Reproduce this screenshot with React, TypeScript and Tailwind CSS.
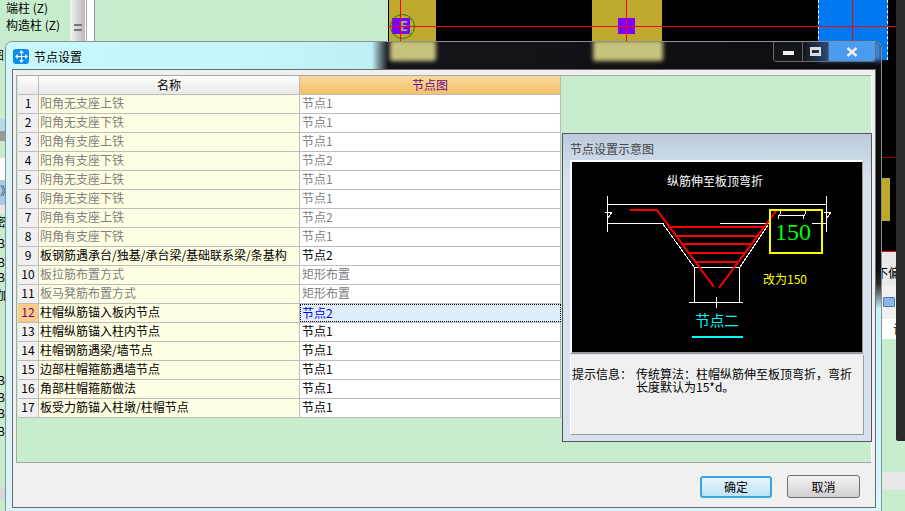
const rows = [
  ["阳角无支座上铁", "节点1", true],
  ["阳角无支座下铁", "节点1", true],
  ["阳角有支座上铁", "节点1", true],
  ["阳角有支座下铁", "节点2", true],
  ["阴角无支座上铁", "节点1", true],
  ["阴角无支座下铁", "节点1", true],
  ["阴角有支座上铁", "节点2", true],
  ["阴角有支座下铁", "节点1", true],
  ["板钢筋遇承台/独基/承台梁/基础联系梁/条基构", "节点2", false],
  ["板拉筋布置方式", "矩形布置", true],
  ["板马凳筋布置方式", "矩形布置", true],
  ["柱帽纵筋锚入板内节点", "节点2", false],
  ["柱帽纵筋锚入柱内节点", "节点1", false],
  ["柱帽钢筋遇梁/墙节点", "节点1", false],
  ["边部柱帽箍筋遇墙节点", "节点1", false],
  ["角部柱帽箍筋做法", "节点1", false],
  ["板受力筋锚入柱墩/柱帽节点", "节点1", false],
] as const;

function Diagram() {
  return (
    <svg viewBox="572 162 290 190" className="block h-[190px] w-[290px] bg-black">
      <g stroke="#fff" strokeWidth="1" fill="none" shapeRendering="crispEdges">
        <path d="M607.5 196V232M826.5 196V232M607 204.5H827M607 223.5H664M720 223.5H769M812 223.5H827" />
        <path d="M663 224L694 267M768 225L740 267M694.5 267V302M739.5 267V302M694 267.5H740M689 302.5H743" />
        <path d="M778 215.5H805M781 211L778 219M806 211L803 219" />
        <path d="M605 212H612L608 218M824 212H831L827 218M716 297V308M713 302H719" />
      </g>
      <g stroke="#f00" fill="none">
        <path d="M630 210H657L714 287M719 288L776 211" strokeWidth="2" />
        <path d="M668 227H766M675 236H759M682 244H752M688 253H744M696 262H738" strokeWidth="2" shapeRendering="crispEdges" />
      </g>
      <rect x="770" y="210" width="52" height="43" fill="none" stroke="#ff0" strokeWidth="2" shapeRendering="crispEdges" />
      <text x="793" y="240" textAnchor="middle" fill="#0f0" className="text-[24px] font-['Liberation_Serif',serif]">150</text>
      <text x="715" y="186" textAnchor="middle" fill="#fff" className="text-[12px]">纵筋伸至板顶弯折</text>
      <text x="785" y="284" textAnchor="middle" fill="#ff0" className="text-[12px]">改为150</text>
      <text x="717" y="326" textAnchor="middle" fill="#0ff" className="text-[14.5px]">节点二</text>
      <path d="M692 336.5H743" stroke="#0ff" strokeWidth="2" shapeRendering="crispEdges" />
    </svg>
  );
}

function Backdrop() {
  return (
    <div className="flex h-full">
      <div className="w-[70px] shrink-0 bg-[#c8ecce] text-[12px] leading-[15px] text-black">
        <div className="pl-[6px]">端柱 (Z)</div>
        <div className="pl-[6px] pt-[2px]">构造柱 (Z)</div>
        <div className="mt-[15px] -ml-[8px]">图</div>
        <div className="mt-[57px] h-[12px] bg-[#b5dbe8]" />
        <div className="h-[10px] bg-[#9a9a9a]" />
        <div className="h-[17px]" />
        <div className="h-[22px] bg-white" />
        <div className="h-[25px] bg-[#a8cbe4] pt-[3px] text-[#26527c]">》</div>
        <div className="h-[9px] bg-[#e8e8e8]" />
        <div className="h-[21px] -ml-[6px]">密</div>
        <div className="h-[19px] -ml-[3px]">B</div>
        <div className="h-[15px] -ml-[3px]">B</div>
        <div className="h-[18px] -ml-[3px]">B</div>
        <div className="h-[85px] -ml-[3px]">加</div>
        <div className="h-[17px] -ml-[3px]">B</div>
        <div className="h-[16px] -ml-[3px]">B</div>
        <div className="h-[18px] -ml-[3px]">B</div>
        <div className="h-[64px] -ml-[3px]">B</div>
        <div className="h-[13px] bg-[#d8d8d8]" />
      </div>
      <div className="flex w-[25px] shrink-0 border-r border-[#9a9a9a] bg-white">
        <div className="flex w-[15px] items-start justify-center bg-[linear-gradient(to_right,#f4f4f4,#b9b9b9)] pt-[24px]">
          <div className="h-[7px] w-[8px] border-y-2 border-[#777]" />
        </div>
        <div className="ml-[1px] w-[1px] bg-[#aaa]" />
      </div>
      <div className="w-[293px] shrink-0 bg-[#c8ecce]" />
      <div className="flex w-[517px] shrink-0">
        <div className="flex w-[508px] flex-col">
          <div className="relative h-[252px] shrink-0 overflow-hidden bg-black">
            <div className="absolute left-[1px] top-0 h-[60px] w-[47px] bg-[#bfa92d]" />
            <div className="absolute left-[204px] top-0 h-[60px] w-[70px] bg-[#bfa92d]" />
            <div className="absolute left-[430px] top-0 h-[60px] w-[70px] border-x border-dashed border-white bg-[#0078ef]" />
            <div className="absolute left-[494px] top-[178px] h-[43px] w-[8px] bg-[#bfa92d]" />
            <div className="absolute left-[230px] top-[18px] h-[16px] w-[17px] bg-[#8000ff]" />
            <div className="absolute left-[4px] top-[18px] h-[16px] w-[18px] bg-[#8000ff]" />
            <div className="absolute left-[2px] top-[14px] h-[25px] w-[25px] rounded-full border border-[#0a8a0a]" />
            <div className="absolute left-[12px] top-[19px] text-[13px] font-bold leading-[14px] text-[#7fbf7f]">E</div>
            <div className="absolute inset-x-0 top-[26px] h-[1px] bg-[#f00]" />
            <div className="absolute left-[12px] top-0 h-[60px] w-[1px] bg-[#f00]" />
            <div className="absolute left-[238px] top-0 h-[60px] w-[1px] bg-[#f00]" />
            <div className="absolute left-[464px] top-0 h-[60px] w-[1px] bg-[#f00]" />
            <div className="absolute bottom-0 inset-x-0 h-[1px] bg-[#f00]" />
            <div className="absolute left-[494px] top-[157px] h-[1px] w-[14px] bg-[#800]" />
          </div>
          <div className="flex h-[33px] shrink-0 items-end justify-end overflow-hidden bg-[#e8e8e8] pb-[5px] text-[12px] leading-[14px] text-black">
            <span className="-mr-[4px] whitespace-nowrap">不偏</span>
          </div>
          <div className="flex h-[34px] shrink-0 items-center justify-end bg-[#f0f0f0] pr-[1px]">
            <div className="h-[10px] w-[12px] rounded-[1px] border border-[#5577aa] bg-[#8ab8ee]" />
          </div>
          <div className="flex h-[20px] shrink-0 items-center justify-end overflow-hidden bg-white text-[12px] leading-none">
            <span className="-mr-[9px]">计</span>
          </div>
          <div className="h-[133px] shrink-0 bg-[#c8ecce]" />
          <div className="h-[18px] shrink-0 bg-[#e8e8e8]" />
          <div className="flex-1 bg-[#c8ecce]" />
        </div>
        <div className="flex w-[9px] flex-col">
          <div className="h-[441px] shrink-0 rounded-bl-[2px] bg-[#2a2a2a]" />
          <div className="h-[31px] shrink-0 bg-[#c8ecce]" />
          <div className="h-[18px] shrink-0 bg-[#e8e8e8]" />
          <div className="flex-1 bg-[#c8ecce]" />
        </div>
      </div>
    </div>
  );
}

function Grid() {
  return (
    <div className="w-[543px] shrink-0 text-[12px] leading-[16px]">
      <div className="grid h-[19px] grid-cols-[21px_261px_261px] border-b border-[#bcbcbc] leading-[18px]">
        <div className="border-r border-[#bcbcbc] bg-[linear-gradient(#ffffff,#e8e8e8)]" />
        <div className="border-r border-[#bcbcbc] bg-[linear-gradient(#ffffff,#e8e8e8)] text-center text-black">名称</div>
        <div className="border-r border-[#bcbcbc] bg-[linear-gradient(#fad99c,#f3c068)] text-center text-[#6a0a8a]">节点图</div>
      </div>
      {rows.map(([name, node, dim], i) => {
        const current = i === 11;
        return (
          <div key={i} className="grid h-[19px] grid-cols-[21px_261px_261px] border-b border-[#bcbcbc]">
            <div className={current ? "border-r border-[#bcbcbc] bg-[#fdcb87] text-center text-[#5a0a8a]" : "border-r border-[#bcbcbc] bg-[#f0f0f0] text-center text-black"}>
              {i + 1}
            </div>
            <div className={dim ? "whitespace-nowrap border-r border-[#bcbcbc] bg-[#fffee3] pl-[1px] text-[#808080]" : "whitespace-nowrap border-r border-[#bcbcbc] bg-[#fffee3] pl-[1px] text-black"}>
              {name}
            </div>
            <div
              className={
                current
                  ? "border border-dotted border-black bg-[#dfedfc] pl-[1px] leading-[15px] text-[#0000e0]"
                  : dim
                    ? "border-r border-[#bcbcbc] bg-white pl-[2px] text-[#808080]"
                    : "border-r border-[#bcbcbc] bg-white pl-[2px] text-black"
              }
            >
              {node}
            </div>
          </div>
        );
      })}
    </div>
  );
}

function PreviewPanel() {
  return (
    <div className="mt-[57px] ml-[1px] flex h-[309px] w-[310px] shrink-0 flex-col border border-[#555] bg-[linear-gradient(#bccbdc,#d6e2f0_45px,#d6e2f0)] px-[7px]">
      <div className="h-[26px] shrink-0 pt-[7px] text-[12px] leading-[16px] text-[#444]">节点设置示意图</div>
      <div className="w-[293px] border-b-2 border-l-2 border-r border-t-2 border-white border-b-[#9a9a9a] border-r-[#9a9a9a]">
        <Diagram />
      </div>
      <div className="mt-[1px] flex h-[80px] w-[294px] border-b border-l border-r border-[#9a9a9a] border-l-white bg-[#f0f0f0] pt-[12px] text-[12px] leading-[13px] text-black">
        <div className="w-[65px] shrink-0 pl-[1px]">提示信息：</div>
        <div className="w-[216px]">传统算法：柱帽纵筋伸至板顶弯折，弯折长度默认为15*d。</div>
      </div>
    </div>
  );
}

function CtrlButtons() {
  return (
    <div className="flex h-[20px] w-[103px] overflow-hidden rounded-b-[4px] border-x border-b border-[#6a6a6a]">
      <div className="flex w-[29px] items-center justify-center border-r border-[#666] bg-[#14151a] pt-[3px]">
        <div className="h-[4px] w-[11px] bg-[#eee]" />
      </div>
      <div className="flex w-[26px] items-center justify-center border-r border-[#666] bg-[linear-gradient(to_right,#14151a,#2a4a78)]">
        <div className="h-[9px] w-[11px] border-2 border-y-[3px] border-[#ddd]" />
      </div>
      <div className="flex flex-1 items-center justify-center bg-[#4a9cf0]">
        <svg viewBox="0 0 12 10" className="h-[10px] w-[12px]">
          <path d="M1.5 1L10.5 9M10.5 1L1.5 9" stroke="#eee" strokeWidth="2.4" />
        </svg>
      </div>
    </div>
  );
}

function DialogWindow() {
  return (
    <div className="absolute left-[5px] top-[41px] flex h-[470px] w-[877px] flex-col overflow-hidden rounded-t-[7px] border-x border-t border-[#8a9094]">
      <div className="relative h-[27px] shrink-0 bg-[linear-gradient(to_right,#c8f8fc_0px,#c6f6fb_240px,#bfeef4_366px,#14141a_382px,#0c0c10_877px)]">
        <div className="absolute left-[384px] -top-[2px] h-[21px] w-[46px] rounded-[2px] bg-[#c6c47c] blur-[2px]" />
        <div className="absolute left-[587px] -top-[2px] h-[21px] w-[70px] rounded-[2px] bg-[#c6c47c] blur-[2px]" />
        <div className="absolute left-[812px] -top-[2px] h-[21px] w-[64px] bg-[#3a84d8] blur-[2px]" />
        <div className="relative flex items-center pl-[7px] pt-[7px]">
          <div className="flex h-[15px] w-[16px] items-center justify-center rounded-[3px] bg-[#0a8cee]">
            <svg viewBox="0 0 14 14" className="h-[13px] w-[13px]" fill="none" stroke="#fff" strokeWidth="1.2">
              <path d="M7 1V13M1 7H13M5 3L7 1L9 3M5 11L7 13L9 11M3 5L1 7L3 9M11 5L13 7L11 9" />
            </svg>
          </div>
          <span className="ml-[5px] text-[12px] leading-[14px] text-black">节点设置</span>
        </div>
        <div className="absolute right-[5px] top-0">
          <CtrlButtons />
        </div>
      </div>
      <div className="flex flex-1">
        <div className="w-[6px] shrink-0 bg-[#d8f4f8]" />
        <div className="flex w-[864px] shrink-0 flex-col border border-[#6a6a6a] bg-[#f0f0f0] p-[3px] pt-[5px]">
          <div className="flex h-[388px] w-[856px] shrink-0 border border-[#a8a8a8] border-r-white bg-[#c8ecce] pl-[1px]">
            <Grid />
            <PreviewPanel />
          </div>
          <div className="flex justify-end gap-[15px] pr-[12px] pt-[13px] text-[12px] text-black">
            <button className="h-[22px] w-[72px] rounded-[3px] border-2 border-[#37a6dc] bg-[linear-gradient(#e7f5fd,#bfe3f8)] leading-none">确定</button>
            <button className="h-[23px] w-[73px] -translate-y-[1px] rounded-[3px] border border-[#707070] bg-[linear-gradient(#f3f3f3,#d0d0d0)] leading-none">取消</button>
          </div>
        </div>
        <div className="flex-1 bg-[linear-gradient(#0c0c10_0px,#0c0c10_200px,#2a2a2a_215px,#c5f4fa_240px,#d8f8fc)]" />
      </div>
      <div className="h-[3px] shrink-0 bg-[#d8f4f8]" />
    </div>
  );
}

export default function App() {
  return (
    <div className="relative h-[511px] w-[905px] overflow-hidden bg-[#c8ecce] font-['Noto_Sans_CJK_SC','Liberation_Sans',sans-serif]">
      <Backdrop />
      <DialogWindow />
    </div>
  );
}
